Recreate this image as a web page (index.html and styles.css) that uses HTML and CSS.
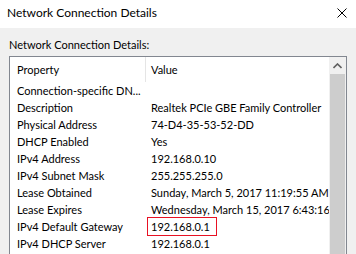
FILE: index.html
```html
<!DOCTYPE html>
<html lang="en">
<head>
    <meta charset="UTF-8">
    <title>Network Connection Details</title>
    <link rel="stylesheet" href="styles.css">
</head>
<body>

<div class="window">
    <div class="titlebar">
        <span class="title">Network Connection Details</span>
        <svg class="close" width="10" height="10" viewBox="0 0 10 10">
            <path d="M0.5 0.5 L9.5 9.5 M9.5 0.5 L0.5 9.5" stroke="#000" stroke-width="1" fill="none"/>
        </svg>
    </div>

    <div class="content">
        <div class="label">Network Connection Details:</div>

        <div class="listbox">
            <div class="list">
                <div class="row head">
                    <div class="prop">Property</div>
                    <div class="val">Value</div>
                </div>
                <div class="row"><div class="prop">Connection-specific DN...</div><div class="val"></div></div>
                <div class="row"><div class="prop">Description</div><div class="val">Realtek PCIe GBE Family Controller</div></div>
                <div class="row"><div class="prop">Physical Address</div><div class="val">74-D4-35-53-52-DD</div></div>
                <div class="row"><div class="prop">DHCP Enabled</div><div class="val">Yes</div></div>
                <div class="row"><div class="prop">IPv4 Address</div><div class="val">192.168.0.10</div></div>
                <div class="row"><div class="prop">IPv4 Subnet Mask</div><div class="val">255.255.255.0</div></div>
                <div class="row"><div class="prop">Lease Obtained</div><div class="val">Sunday, March 5, 2017 11:19:55 AM</div></div>
                <div class="row"><div class="prop">Lease Expires</div><div class="val">Wednesday, March 15, 2017 6:43:16</div></div>
                <div class="row"><div class="prop">IPv4 Default Gateway</div><div class="val"><span class="marked">192.168.0.1</span></div></div>
                <div class="row"><div class="prop">IPv4 DHCP Server</div><div class="val">192.168.0.1</div></div>
            </div>

            <div class="scrollbar">
                <div class="arrow">
                    <svg width="9" height="6" viewBox="0 0 9 6">
                        <path d="M0.5 5 L4.5 1 L8.5 5" stroke="#606060" stroke-width="1.6" fill="none"/>
                    </svg>
                </div>
                <div class="thumb"></div>
            </div>
        </div>
    </div>
</div>

</body>
</html>
```

FILE: styles.css
```css
body {
    margin: 0;
    font-family: Lato, "Liberation Sans", Arial, sans-serif;
    font-size: 11px;
    color: #000;
    background-color: #f0f0f0;
}
.window {
    width: 356px;
    height: 254px;
    overflow: hidden;
    display: flex;
    flex-direction: column;
}
.titlebar {
    height: 28px;
    flex-shrink: 0;
    background-color: #fff;
    display: flex;
    align-items: center;
    justify-content: space-between;
    padding: 0 9px 3px 7px;
    box-sizing: border-box;
    font-size: 12px;
}
.content {
    flex: 1;
    min-height: 0;
    padding: 9px 9px 0 9px;
    display: flex;
    flex-direction: column;
}
.label {
    line-height: 16px;
    margin-bottom: 3px;
}
.listbox {
    flex: 1;
    display: flex;
    border: 1px solid #828790;
    border-bottom: none;
    background-color: #fff;
    overflow: hidden;
}
.list {
    flex: 1;
    min-width: 0;
    overflow: hidden;
}
.row {
    display: flex;
    height: 17px;
    align-items: center;
    white-space: nowrap;
}
.row.head {
    height: 25px;
}
.prop {
    width: 128px;
    flex-shrink: 0;
    padding-left: 7px;
}
.head .prop {
    align-self: stretch;
    display: flex;
    align-items: center;
    border-right: 1px solid #e5e5e5;
}
.val {
    padding-left: 5px;
    white-space: nowrap;
}
.row:not(.head) .val {
    padding-left: 6px;
}
.marked {
    display: inline-block;
    height: 17px;
    line-height: 17px;
    border: 1px solid #e81123;
    padding: 0 6px 0 3px;
    margin-left: -4px;
}
.scrollbar {
    width: 17px;
    flex-shrink: 0;
    background-color: #f0f0f0;
    display: flex;
    flex-direction: column;
}
.arrow {
    height: 17px;
    display: flex;
    align-items: center;
    justify-content: center;
}
.thumb {
    flex: 1;
    margin: 0 1px;
    background-color: #cdcdcd;
}
```
